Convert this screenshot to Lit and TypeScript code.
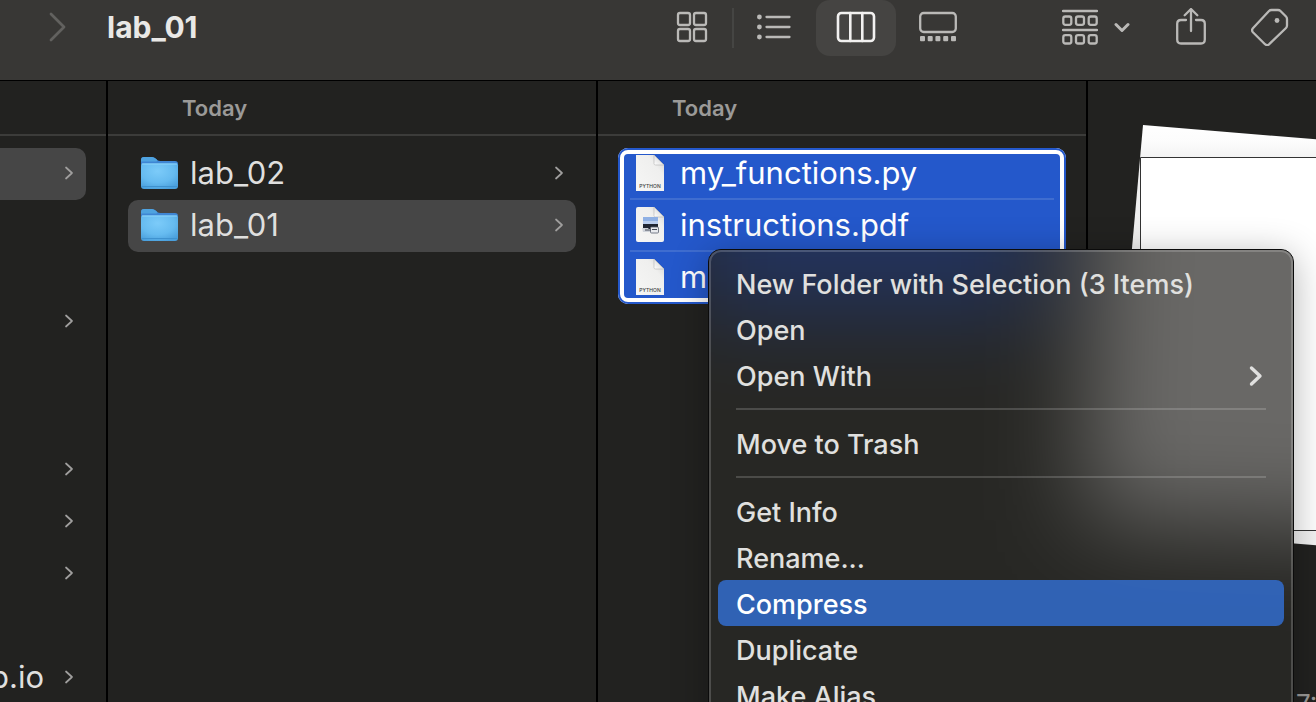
import { LitElement, html, css, svg, nothing } from "lit";
import { customElement, property, state } from "lit/decorators.js";
import { classMap } from "lit/directives/class-map.js";

const chevron = html`<svg class="chevron" width="10" height="14" viewBox="0 0 10 14" aria-hidden="true">
  <path d="M2 1.500 8 7 2 12.500" fill="none" stroke="currentColor" stroke-width="1.700" stroke-linecap="round" stroke-linejoin="round" />
</svg>`;

const folderIcon = html`<svg width="38" height="36" viewBox="0 0 38 36" aria-hidden="true">
  <defs>
    <radialGradient id="face" cx=".45" cy=".3" r=".75">
      <stop offset="0" stop-color="#7ccbf9" /><stop offset=".6" stop-color="#66bbf0" /><stop offset="1" stop-color="#4a9fdc" />
    </radialGradient>
  </defs>
  <path d="M0 5Q0 2 3 2H11Q13 2 14.500 3.500L16.500 5.200Q17.500 6 19.500 6H34Q37 6 37 9V16H0Z" fill="#3f86d4" />
  <path d="M0 5Q0 2 3 2H11Q13 2 14.500 3.500L16.500 5.200 15.500 6.500H0Z" fill="#4fa3e0" />
  <path d="M0 10.500Q0 8.500 2 8.500H35Q37 8.500 37 10.500V31Q37 34 34 34H3Q0 34 0 31Z" fill="url(#face)" />
  <path d="M1 9H36" stroke="#8ed6fb" stroke-width="1" />
  <path d="M.5 31.500H36.500" stroke="#3f92cf" stroke-width="1" />
</svg>`;

const sheet = (rounded: boolean) => svg`
  <defs>
    <linearGradient id="fold" x1="0" y1="1" x2="1" y2="0">
      <stop offset="0" stop-color="#fff" /><stop offset=".5" stop-color="#e4e4e4" /><stop offset="1" stop-color="#bbb" />
    </linearGradient>
    <linearGradient id="paper" x1="0" y1="1" x2="1" y2="0">
      <stop offset="0" stop-color="#f6f6f5" /><stop offset=".7" stop-color="#efefee" /><stop offset="1" stop-color="#cfcfce" />
    </linearGradient>
  </defs>
  <path d=${rounded ? "M2 0H18L28 10V33Q28 35 26 35H2Q0 35 0 33V2Q0 0 2 0Z" : "M0 0H18L28 10V36H0Z"} fill="url(#paper)" />
  <path d="M18 0 28 10H19.500Q18 10 18 8.500Z" fill="url(#fold)" stroke="#b4b4b4" stroke-width=".6" />`;

const pythonIcon = html`<svg width="28" height="36" viewBox="0 0 28 36" aria-hidden="true">
  ${sheet(false)}
  <text x="14" y="33" text-anchor="middle" font-family="Inter, sans-serif" font-size="5" font-weight="500" fill="#3a3a3a">PYTHON</text>
</svg>`;

const pdfIcon = html`<svg width="28" height="36" viewBox="0 0 28 36" aria-hidden="true">
  ${sheet(true)}
  <rect x="7" y="10" width="15" height="9" fill="#8fb0e4" />
  <rect x="7" y="14" width="15" height="3" fill="#b9cdee" />
  <path d="M7 17H22V22H7Z" fill="#1f2532" />
  <path d="M6 21H12L15 25H7Z" fill="#cfd3da" />
  <rect x="14.500" y="20" width="8" height="6" rx="1" fill="#e8eaee" stroke="#59606e" stroke-width=".8" />
  <path d="M9 23H15M16 22.500H21" stroke="#444b59" stroke-width="1" />
</svg>`;

const line = (w: number, h: number, body: unknown) => html`<svg width=${w} height=${h} viewBox="0 0 ${w} ${h}"
  fill="none" stroke="currentColor" stroke-width="2.300" stroke-linecap="round" stroke-linejoin="round" aria-hidden="true">${body}</svg>`;

const gridIcon = line(32, 32, svg`
  <rect x="2" y="2" width="12" height="12" rx="2" /><rect x="18" y="2" width="12" height="12" rx="2" />
  <rect x="2" y="18" width="12" height="12" rx="2" /><rect x="18" y="18" width="12" height="12" rx="2" />`);
const listIcon = line(34, 26, svg`
  <path d="M9.500 3H32.500M9.500 13H32.500M9.500 23H32.500" />
  <g fill="currentColor" stroke="none"><circle cx="2.400" cy="3" r="2.400" /><circle cx="2.400" cy="13" r="2.400" /><circle cx="2.400" cy="23" r="2.400" /></g>`);
const columnsIcon = line(40, 32, svg`
  <g stroke-width="2.600"><rect x="2" y="2" width="36" height="28" rx="3.500" /><path d="M14.300 2V30M26.300 2V30" /></g>`);
const galleryIcon = line(38, 32, svg`
  <rect x="1.200" y="2" width="35.600" height="19" rx="3.500" />
  <g fill="currentColor" stroke="none">${[1, 8.7, 16.4, 24.2, 32].map((x) => svg`<rect x=${x} y="25" width="5" height="5.200" rx="1" />`)}</g>`);
const groupIcon = line(36, 36, svg`
  <path d="M1 2H35M1 21H35" />
  ${[7.5, 26.2].map((y) => [1.3, 14, 26.7].map((x) => svg`<rect x=${x} y=${y} width="8" height="8.300" rx="2" />`))}`);
const downIcon = html`<svg width="16" height="12" viewBox="0 0 16 12" fill="none" stroke="currentColor" stroke-width="3" stroke-linecap="round" stroke-linejoin="round" aria-hidden="true"><path d="M2 3.500 8 9.500 14 3.500" /></svg>`;
const shareIcon = line(30, 38, svg`
  <path d="M10 12H5Q1.200 12 1.200 15.800V31.500Q1.200 35.500 5 35.500H25Q28.800 35.500 28.800 31.500V15.800Q28.800 12 25 12H20M15 1.500V23M8.700 7.200 15 1 21.300 7.200" />`);
const tagIcon = line(38, 38, svg`
  <path d="M20.500 2H27Q28.500 2 29.500 3L35 8.500Q36 9.500 36 11V17.500Q36 19 35 20L18 36.300Q16 38 14 36.200L1.900 24.200Q.2 22.300 1.900 20.300L18 3Q19 2 20.500 2Z" />
  <circle cx="26" cy="12.500" r="2.400" fill="currentColor" stroke="none" />`);

@customElement("finder-toolbar")
export class FinderToolbar extends LitElement {
  @state() private view = "columns";

  static styles = css`
    :host {
      display: flex;
      height: 56px;
      padding: 0 7px 24px 50px;
      background: #383735;
      border-bottom: 1px solid #000;
      color: #bab9b7;
    }
    button {
      appearance: none;
      border: 0;
      padding: 0;
      margin: 0;
      background: none;
      color: inherit;
      display: flex;
      align-items: center;
      justify-content: center;
    }
    svg { display: block; flex: none; }
    .forward { width: 16px; height: 54px; color: #62615f; }
    h1 {
      flex: 1;
      min-width: 0;
      margin: 0 0 0 41px;
      font-size: 30px;
      line-height: 54px;
      font-weight: 700;
      color: #e9e8e6;
    }
    .views { display: flex; gap: 2px; margin-right: 72px; }
    .view { width: 80px; height: 56px; padding-bottom: 2px; box-sizing: border-box; border-radius: 14px; }
    .view.on { background: #454442; color: #f2f1f0; }
    .view.first { margin-right: -2px; }
    .rule { width: 2px; height: 40px; margin-top: 8px; margin-right: -2px; background: #454543; }
    .group { height: 54px; gap: 16px; padding: 0 12px; margin-right: 9px; }
    .tool { width: 79px; height: 54px; }
  `;

  private viewButton(name: string, label: string, icon: unknown, first = false) {
    return html`<button
      class=${classMap({ view: true, first, on: this.view === name })}
      aria-label=${label}
      aria-pressed=${this.view === name}
      @click=${() => (this.view = name)}
    >${icon}</button>`;
  }

  render() {
    return html`
      <button class="forward" aria-label="Forward" disabled>
        ${line(18, 30, svg`<path d="M2 2 15 15 2 28" stroke-width="2.800" />`)}
      </button>
      <h1>lab_01</h1>
      <div class="views">
        ${this.viewButton("icons", "Icons", gridIcon, true)}
        <span class="rule"></span>
        ${this.viewButton("list", "List", listIcon)}
        ${this.viewButton("columns", "Columns", columnsIcon)}
        ${this.viewButton("gallery", "Gallery", galleryIcon)}
      </div>
      <button class="group" aria-label="Group">${groupIcon}${downIcon}</button>
      <button class="tool" aria-label="Share">${shareIcon}</button>
      <button class="tool" aria-label="Tags">${tagIcon}</button>
    `;
  }
}

type MenuEntry = { label: string; sub?: boolean } | "rule";

@customElement("context-menu")
export class ContextMenu extends LitElement {
  @property({ attribute: false }) entries: MenuEntry[] = [];
  @state() private active = "Compress";

  static styles = css`
    :host {
      display: block;
      box-sizing: border-box;
      border: 1px solid #0b0b0b;
      border-radius: 13px;
      background: #282825;
      box-shadow: 0 6px 36px rgba(0, 0, 0, 0.3);
    }
    .glass {
      position: absolute;
      inset: 0;
      width: 100%;
      height: 100%;
      border-radius: 12px;
    }
    .items {
      position: relative;
      height: 100%;
      box-sizing: border-box;
      padding: 10px 9px;
      border-radius: 12px;
      box-shadow: inset 0 0 0 2px rgba(255, 255, 255, 0.18);
    }
    button {
      appearance: none;
      border: 0;
      margin: 0;
      width: 100%;
      height: 46px;
      padding: 2px 18px 0;
      display: flex;
      align-items: center;
      justify-content: space-between;
      background: none;
      border-radius: 8px;
      color: #e0e0df;
      font: inherit;
      font-size: 27px;
      font-weight: 450;
      text-align: left;
      white-space: nowrap;
    }
    button.active { background: rgba(50, 111, 212, 0.82); color: #fff; }
    hr { border: 0; height: 2px; margin: 10px 18px; background: rgba(255, 255, 255, 0.17); }
  `;

  render() {
    return html`
      <svg class="glass" viewBox="0 0 584 518" preserveAspectRatio="none" aria-hidden="true">
        <defs>
          <filter id="soft" filterUnits="userSpaceOnUse" x="-200" y="-200" width="1000" height="900" color-interpolation-filters="sRGB">
            <feGaussianBlur stdDeviation="48" />
          </filter>
        </defs>
        <g filter="url(#soft)">
          <path d="M-200-200H800V700H-200Z" fill="#272724" />
          <path d="M-20-160H330V60H-20Z" fill="#22335f" />
          <path d="M388-200H800V285L376 270Z" fill="#696866" />
        </g>
      </svg>
      <div class="items">
        ${this.entries.map((entry) =>
          entry === "rule"
            ? html`<hr />`
            : html`<button
                role="menuitem"
                class=${classMap({ active: entry.label === this.active })}
                @mouseenter=${() => (this.active = entry.label)}
              >
                <span>${entry.label}</span>
                ${entry.sub
                  ? html`<svg width="20" height="24" viewBox="0 0 20 24" fill="none" stroke="currentColor" stroke-width="3.400" stroke-linecap="round" stroke-linejoin="round" aria-hidden="true"><path d="M5.500 4 14 12 5.500 20" /></svg>`
                  : nothing}
              </button>`
        )}
      </div>`;
  }
}

@customElement("app-root")
export class AppRoot extends LitElement {
  @state() private folder = "lab_01";

  private parents = [
    [{ name: "", open: true }],
    [{ name: "" }],
    [{ name: "" }, { name: "" }, { name: "" }, null, { name: "b.io" }],
  ] as ({ name: string; open?: boolean } | null)[][];

  private files = [
    { name: "my_functions.py", icon: pythonIcon },
    { name: "instructions.pdf", icon: pdfIcon },
    { name: "m", icon: pythonIcon },
  ];

  private entries: MenuEntry[] = [
    { label: "New Folder with Selection (3 Items)" },
    { label: "Open" },
    { label: "Open With", sub: true },
    "rule",
    { label: "Move to Trash" },
    "rule",
    { label: "Get Info" },
    { label: "Rename..." },
    { label: "Compress" },
    { label: "Duplicate" },
    { label: "Make Alias" },
  ];

  static styles = css`
    :host {
      display: flex;
      flex-direction: column;
      height: 100vh;
      position: relative;
      overflow: hidden;
      background: #222220;
      color: #dfdfde;
      font-family: Inter, "Liberation Sans", sans-serif;
    }
    .browser { flex: 1; min-height: 0; display: flex; }
    .column {
      flex: none;
      width: 490px;
      box-sizing: border-box;
      border-right: 2px solid #000;
      overflow: hidden;
    }
    .column.parent { width: 108px; }
    h2 {
      height: 53px;
      margin: 0;
      padding-left: 74px;
      border-bottom: 2px solid #3c3c3a;
      font-size: 22px;
      line-height: 54px;
      font-weight: 600;
      color: #9b9a98;
    }
    ul { list-style: none; margin: 12px 20px 0; padding: 0; }
    .parent ul { margin-left: 0; }
    .parent ul + ul { margin-top: 96px; }
    .row {
      appearance: none;
      border: 0;
      margin: 0;
      width: 100%;
      height: 52px;
      padding: 0 12px 2px 13px;
      display: flex;
      align-items: center;
      gap: 11px;
      background: none;
      border-radius: 10px;
      color: inherit;
      font: inherit;
      font-size: 31px;
      font-weight: 420;
      text-align: left;
      white-space: nowrap;
    }
    .row.open { background: #464646; }
    .row svg { display: block; flex: none; }
    .name { flex: 1; min-width: 0; padding-bottom: 2px; }
    .chevron { color: #a09f9e; }
    .parent .row { gap: 20px; padding-left: 0; border-radius: 0 10px 10px 0; }
    .parent .name { display: flex; justify-content: flex-end; }
    .blank { height: 52px; }
    .selection {
      border-radius: 10px;
      background: #2458cb;
      box-shadow: inset 0 0 0 2px #2458cb, inset 0 0 0 6px #fff;
      color: #fff;
    }
    .selection .row { padding-left: 18px; gap: 16px; }
    .selection li:not(:last-child) { background: linear-gradient(#3f6dd0, #3f6dd0) center bottom / calc(100% - 24px) 2px no-repeat; }
    .preview { flex: 1; min-width: 0; overflow: hidden; }
    .pages { display: block; margin: 39px 0 0 12px; }
    .info { margin: 128px 0 0 208px; font-size: 26px; line-height: 32px; color: #9b9a98; white-space: nowrap; }
    context-menu { position: absolute; left: 708px; top: 249px; width: 586px; height: 520px; }
  `;

  render() {
    return html`
      <finder-toolbar></finder-toolbar>
      <main class="browser">
        <section class="column parent">
          <h2></h2>
          ${this.parents.map(
            (group) => html`<ul>
              ${group.map((item) =>
                item
                  ? html`<li><button class=${classMap({ row: true, open: !!item.open })}><span class="name">${item.name}</span>${chevron}</button></li>`
                  : html`<li class="blank"></li>`
              )}
            </ul>`
          )}
        </section>
        <section class="column">
          <h2>Today</h2>
          <ul>
            ${["lab_02", "lab_01"].map(
              (name) => html`<li>
                <button class=${classMap({ row: true, open: name === this.folder })} @click=${() => (this.folder = name)}>
                  ${folderIcon}<span class="name">${name}</span>${chevron}
                </button>
              </li>`
            )}
          </ul>
        </section>
        <section class="column">
          <h2>Today</h2>
          <ul class="selection">
            ${this.files.map((file) => html`<li><button class="row">${file.icon}<span class="name">${file.name}</span></button></li>`)}
          </ul>
        </section>
        <section class="preview">
          <svg class="pages" width="320" height="440" viewBox="0 0 320 440" aria-hidden="true">
            <defs>
              <linearGradient id="shade" x1="0" y1="0" x2="0" y2="1">
                <stop offset="0" stop-color="#fff" /><stop offset=".04" stop-color="#fcfcfc" /><stop offset=".09" stop-color="#efefef" /><stop offset="1" stop-color="#f4f4f4" />
              </linearGradient>
            </defs>
            <path d="M43 5 320 28V434L7 408Z" fill="url(#shade)" />
            <path d="M40.500 37.500H330V410.500H40.500Z" fill="#fff" stroke="#333" />
          </svg>
          <p class="info">7:48</p>
        </section>
      </main>
      <context-menu role="menu" .entries=${this.entries}></context-menu>
    `;
  }
}
